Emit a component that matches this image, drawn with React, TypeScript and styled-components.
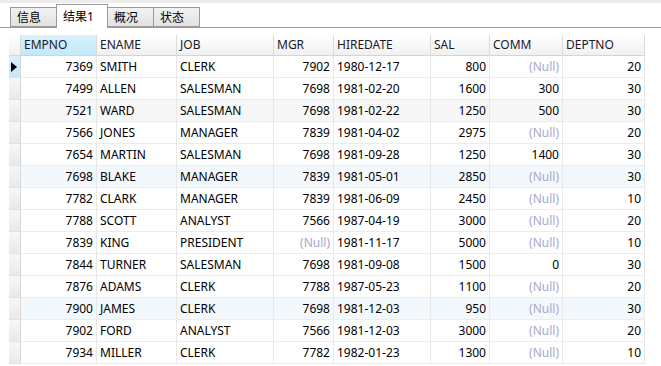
import React from 'react';
import styled, { createGlobalStyle } from 'styled-components';

const GlobalStyle = createGlobalStyle`
  html, body {
    margin: 0;
    padding: 0;
    background: #ffffff;
  }
  body {
    font-family: 'Noto Sans', 'Noto Sans CJK SC', sans-serif;
    font-size: 12px;
    color: #000000;
  }
`;

const COLS = '12px 76px 80px 97px 60px 97px 59px 73px 82px';

const Page = styled.div`
  width: 661px;
  height: 366px;
  overflow: hidden;
  border-top: 3px solid #ececec;
  box-sizing: border-box;
`;

const TabBar = styled.div`
  display: flex;
  align-items: flex-end;
  height: 25px;
  padding-left: 10px;
  border-bottom: 1px solid #9a9a9a;
  box-sizing: border-box;
`;

const Tab = styled.div<{ $active?: boolean; $w: number }>`
  width: ${(p) => p.$w}px;
  height: ${(p) => (p.$active ? 24 : 20)}px;
  margin-bottom: ${(p) => (p.$active ? -1 : 0)}px;
  margin-right: -1px;
  box-sizing: border-box;
  border: 1px solid #9a9a9a;
  border-bottom: ${(p) => (p.$active ? 'none' : '1px solid #9a9a9a')};
  background: ${(p) =>
    p.$active ? '#ffffff' : 'linear-gradient(#f2f2f2, #e2e2e2)'};
  padding: ${(p) => (p.$active ? '4px 0 0 6px' : '2px 0 0 6px')};
  line-height: 16px;
  position: relative;
  z-index: ${(p) => (p.$active ? 1 : 0)};
`;

const Grid = styled.div`
  margin: 7px 0 0 9px;
  width: 636px;
`;

const Row = styled.div<{ $bg?: string }>`
  display: grid;
  grid-template-columns: ${COLS};
  height: 22px;
  background: ${(p) => p.$bg || '#ffffff'};
`;

const HeadRow = styled(Row)`
  height: 21px;
`;

const HeadCell = styled.div<{ $sel?: boolean }>`
  box-sizing: border-box;
  border-right: 1px solid #dadada;
  border-bottom: 1px solid #d4d4d4;
  background: ${(p) =>
    p.$sel
      ? 'linear-gradient(#d9f2fc, #c2e8f8)'
      : 'linear-gradient(#ffffff, #f0f0f0)'};
  padding: 0 3px;
  line-height: 20px;
  color: #1a1a2a;
  white-space: nowrap;
  overflow: hidden;
`;

const Cell = styled.div<{ $right?: boolean; $null?: boolean }>`
  box-sizing: border-box;
  border-right: 1px solid #e8e8e8;
  border-bottom: 1px solid #ececec;
  padding: 0 3px;
  line-height: 21px;
  text-align: ${(p) => (p.$right ? 'right' : 'left')};
  color: ${(p) => (p.$null ? '#aca6c8' : '#000000')};
  white-space: nowrap;
  overflow: hidden;
`;

const Indicator = styled.div<{ $current?: boolean }>`
  box-sizing: border-box;
  border-right: 1px solid #d8d8d8;
  border-bottom: 1px solid #e2e2e2;
  background: ${(p) =>
    p.$current
      ? 'linear-gradient(#d9f2fc, #c2e8f8)'
      : 'linear-gradient(#f7f7f7, #e9e9e9)'};
  display: flex;
  align-items: center;
  padding-left: 2px;
`;

type Emp = [number, string, string, number | null, string, number, number | null, number];

const data: Emp[] = [
  [7369, 'SMITH', 'CLERK', 7902, '1980-12-17', 800, null, 20],
  [7499, 'ALLEN', 'SALESMAN', 7698, '1981-02-20', 1600, 300, 30],
  [7521, 'WARD', 'SALESMAN', 7698, '1981-02-22', 1250, 500, 30],
  [7566, 'JONES', 'MANAGER', 7839, '1981-04-02', 2975, null, 20],
  [7654, 'MARTIN', 'SALESMAN', 7698, '1981-09-28', 1250, 1400, 30],
  [7698, 'BLAKE', 'MANAGER', 7839, '1981-05-01', 2850, null, 30],
  [7782, 'CLARK', 'MANAGER', 7839, '1981-06-09', 2450, null, 10],
  [7788, 'SCOTT', 'ANALYST', 7566, '1987-04-19', 3000, null, 20],
  [7839, 'KING', 'PRESIDENT', null, '1981-11-17', 5000, null, 10],
  [7844, 'TURNER', 'SALESMAN', 7698, '1981-09-08', 1500, 0, 30],
  [7876, 'ADAMS', 'CLERK', 7788, '1987-05-23', 1100, null, 20],
  [7900, 'JAMES', 'CLERK', 7698, '1981-12-03', 950, null, 30],
  [7902, 'FORD', 'ANALYST', 7566, '1981-12-03', 3000, null, 20],
  [7934, 'MILLER', 'CLERK', 7782, '1982-01-23', 1300, null, 10],
];

const headers = ['EMPNO', 'ENAME', 'JOB', 'MGR', 'HIREDATE', 'SAL', 'COMM', 'DEPTNO'];

const rowBg = (i: number) => {
  if (i === 5 || i === 11) return '#f3f8fd';
  if (i === 2) return '#f7f7f7';
  return '#ffffff';
};

const Num = ({ v }: { v: number | null }) =>
  v === null ? (
    <Cell $right $null>
      (Null)
    </Cell>
  ) : (
    <Cell $right>{v}</Cell>
  );

export default function App() {
  return (
    <Page>
      <GlobalStyle />
      <TabBar>
        <Tab $w={47}>信息</Tab>
        <Tab $w={52} $active>
          结果1
        </Tab>
        <Tab $w={47}>概况</Tab>
        <Tab $w={47}>状态</Tab>
      </TabBar>
      <Grid>
        <HeadRow>
          <HeadCell />
          {headers.map((h, i) => (
            <HeadCell key={h} $sel={i === 0}>
              {h}
            </HeadCell>
          ))}
        </HeadRow>
        {data.map((r, i) => (
          <Row key={r[0]} $bg={rowBg(i)}>
            <Indicator $current={i === 0}>
              {i === 0 && (
                <svg width="6" height="10" viewBox="0 0 6 10">
                  <path d="M0 0 L6 5 L0 10 Z" fill="#000" />
                </svg>
              )}
            </Indicator>
            <Cell $right>{r[0]}</Cell>
            <Cell>{r[1]}</Cell>
            <Cell>{r[2]}</Cell>
            <Num v={r[3]} />
            <Cell>{r[4]}</Cell>
            <Cell $right>{r[5]}</Cell>
            <Num v={r[6]} />
            <Cell $right>{r[7]}</Cell>
          </Row>
        ))}
      </Grid>
    </Page>
  );
}
